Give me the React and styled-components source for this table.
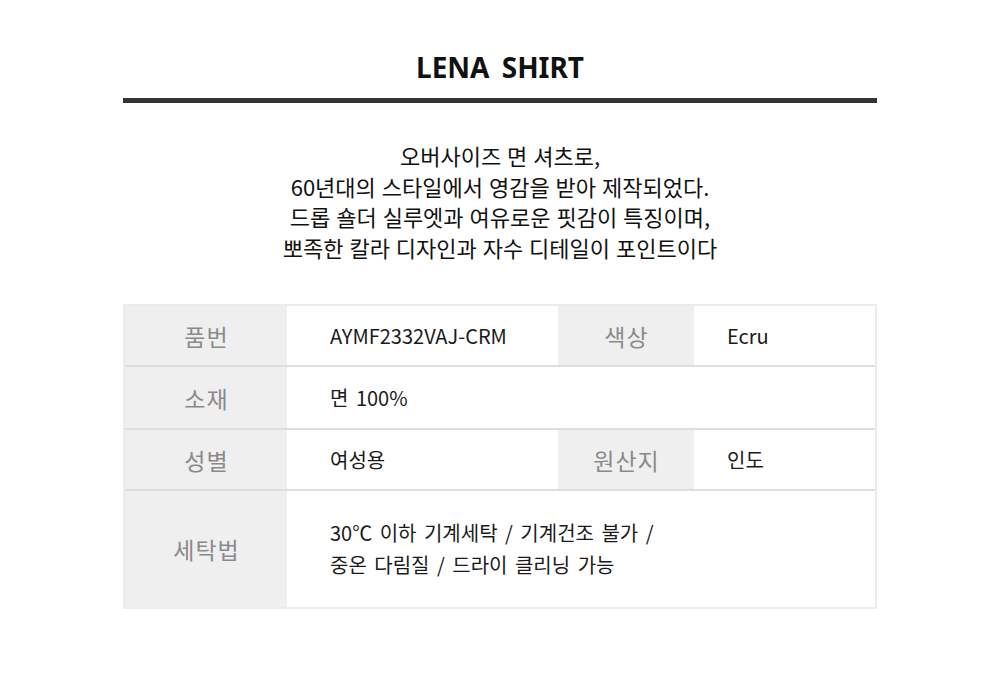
import React from 'react';
import styled, { createGlobalStyle } from 'styled-components';

const GlobalStyle = createGlobalStyle`
  body {
    margin: 0;
    background: #ffffff;
    font-family: "Noto Sans CJK KR", "Noto Sans", sans-serif;
  }
`;

const Page = styled.div`
  width: 754px;
  margin: 0 auto;
`;

const Title = styled.h1`
  margin: 47px 0 0;
  font-family: "Noto Sans", "DejaVu Sans", sans-serif;
  font-size: 28px;
  font-weight: 700;
  line-height: 40px;
  text-align: center;
  color: #111111;
  word-spacing: 5px;
`;

const Rule = styled.div`
  height: 5px;
  margin-top: 11px;
  background: #333333;
`;

const Intro = styled.p`
  margin: 37px 0 0;
  font-size: 22px;
  line-height: 30.5px;
  word-spacing: 1px;
  text-align: center;
  color: #111111;
`;

const Table = styled.div`
  margin-top: 42px;
  border: 2px solid #ececec;
`;

const Row = styled.div`
  display: grid;
  grid-template-columns: 162px 271px 136px 1fr;
  height: ${(p) => p.$height}px;
  border-bottom: ${(p) => (p.$last ? 'none' : '2px solid #dedede')};
`;

const Label = styled.div`
  display: flex;
  align-items: center;
  justify-content: center;
  padding-left: 1px;
  background: #efefef;
  color: #8a8a8a;
  font-size: 23px;
  letter-spacing: 1px;
`;

const Value = styled.div`
  display: flex;
  align-items: center;
  padding-left: ${(p) => p.$pad}px;
  grid-column: ${(p) => (p.$wide ? 'span 3' : 'auto')};
  color: #1a1a1a;
  font-size: 20px;
  line-height: 32px;
  word-spacing: 3px;
`;

const specs = [
  { height: 59, cells: [['품번', 'AYMF2332VAJ-CRM'], ['색상', 'Ecru']] },
  { height: 61, cells: [['소재', '면 100%']] },
  { height: 59, cells: [['성별', '여성용'], ['원산지', '인도']] },
  {
    height: 116,
    cells: [['세탁법', ['30℃ 이하 기계세탁 / 기계건조 불가 /', '중온 다림질 / 드라이 클리닝 가능']]],
  },
];

export default function App() {
  return (
    <Page>
      <GlobalStyle />
      <Title>LENA SHIRT</Title>
      <Rule />
      <Intro>
        오버사이즈 면 셔츠로,
        <br />
        60년대의 스타일에서 영감을 받아 제작되었다.
        <br />
        드롭 숄더 실루엣과 여유로운 핏감이 특징이며,
        <br />
        뽀족한 칼라 디자인과 자수 디테일이 포인트이다
      </Intro>
      <Table>
        {specs.map((row, i) => (
          <Row key={i} $height={row.height} $last={i === specs.length - 1}>
            {row.cells.map(([label, value], j) => (
              <React.Fragment key={label}>
                <Label>{label}</Label>
                <Value $pad={j === 0 ? 43 : 33} $wide={row.cells.length === 1}>
                  {Array.isArray(value) ? (
                    <span>
                      {value[0]}
                      <br />
                      {value[1]}
                    </span>
                  ) : (
                    value
                  )}
                </Value>
              </React.Fragment>
            ))}
          </Row>
        ))}
      </Table>
    </Page>
  );
}
